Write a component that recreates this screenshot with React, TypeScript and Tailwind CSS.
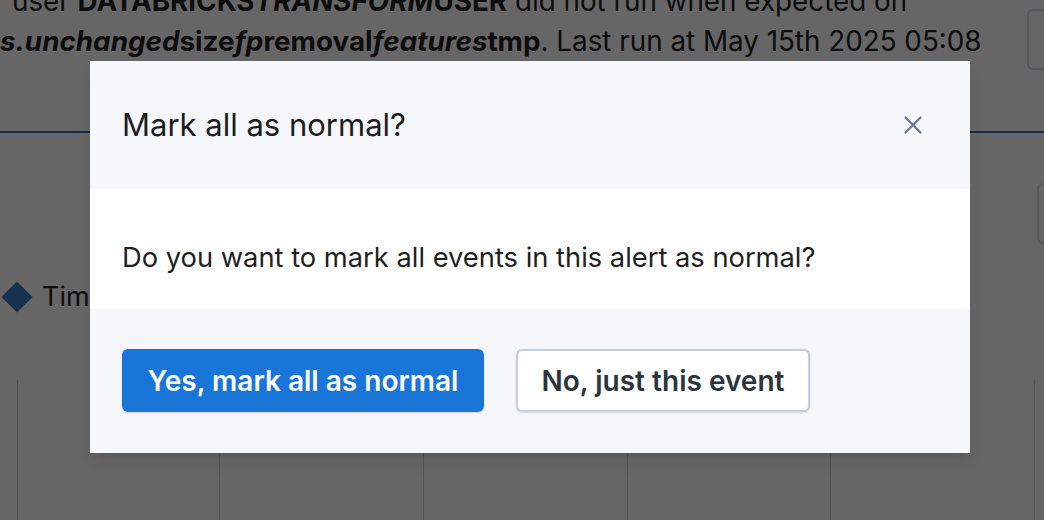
import { X } from "lucide-react";

const font = { fontFamily: "Inter, 'Noto Sans', sans-serif" };

const gridCols = [17, 219, 423, 627, 830, 1034];

const BackgroundPage = () => (
  <div className="relative flex h-full w-full flex-col bg-white text-[#222]">
    <div className="-mt-[19px] pl-[12px] text-[27.8px] leading-[40px]">
      <p className="whitespace-nowrap">
        user <b>DATABRICKS</b>
        <b className="italic">TRANSFORM</b>
        <b>USER</b> did not run when expected on
      </p>
      <p className="-ml-[12px] whitespace-nowrap">
        <b className="italic">s.unchanged</b>
        <b>size</b>
        <b className="italic">fp</b>
        <b>removal</b>
        <b className="italic">features</b>
        <b>tmp</b>. Last run at May 15th 2025 05:08
      </p>
    </div>

    {/* right side buttons, cut off by the window */}
    <div className="absolute left-[1027px] top-[9px] h-[61px] w-[60px] rounded-md border-2 border-[#d4dbe3]" />
    <div className="absolute left-[1037px] top-[183px] h-[61px] w-[60px] rounded-md border-2 border-[#d4dbe3]" />

    <div className="absolute left-0 right-0 top-[131px] h-[2px] bg-[#2f6fc4]" />

    <div className="absolute left-[6px] top-[279px] flex items-center gap-[14px]">
      <div className="h-[22px] w-[22px] rotate-45 bg-[#3d7cc9]" />
      <span className="text-[27px] leading-[36px]">Time</span>
    </div>

    {gridCols.map((x) => (
      <div
        key={x}
        className="absolute top-[380px] bottom-0 w-px bg-[#d6d6de]"
        style={{ left: x }}
      />
    ))}
  </div>
);

const ConfirmModal = () => (
  <div className="absolute left-[90px] top-[61px] w-[880px] overflow-hidden bg-white shadow-lg">
    <div className="flex h-[128px] items-center justify-between bg-[#f5f7fb] pl-[32px] pr-[42px]">
      <h2 className="text-[31px] leading-[38px] text-[#1c1c1e]">Mark all as normal?</h2>
      <X className="h-[30px] w-[30px] text-[#6b7c8e]" strokeWidth={1.8} />
    </div>
    <div className="bg-white pl-[32px] pt-[51px] pb-[33px]">
      <p className="text-[27.3px] leading-[36px] text-[#1f1f1f]">
        Do you want to mark all events in this alert as normal?
      </p>
    </div>
    <div className="flex gap-[32px] bg-[#f5f7fb] pl-[32px] pt-[40px] pb-[41px]">
      <button className="h-[63px] w-[362px] rounded-[6px] bg-[#1976d8] text-[28px] font-semibold text-white shadow-sm">
        Yes, mark all as normal
      </button>
      <button className="h-[63px] w-[294px] rounded-[6px] border-2 border-[#c3cfdc] bg-white text-[28px] font-semibold text-[#2b3540] shadow-sm">
        No, just this event
      </button>
    </div>
  </div>
);

export default function App() {
  return (
    <div className="relative h-[520px] w-[1044px] overflow-hidden" style={font}>
      <BackgroundPage />
      <div className="absolute inset-0 bg-black/60" />
      <ConfirmModal />
    </div>
  );
}
